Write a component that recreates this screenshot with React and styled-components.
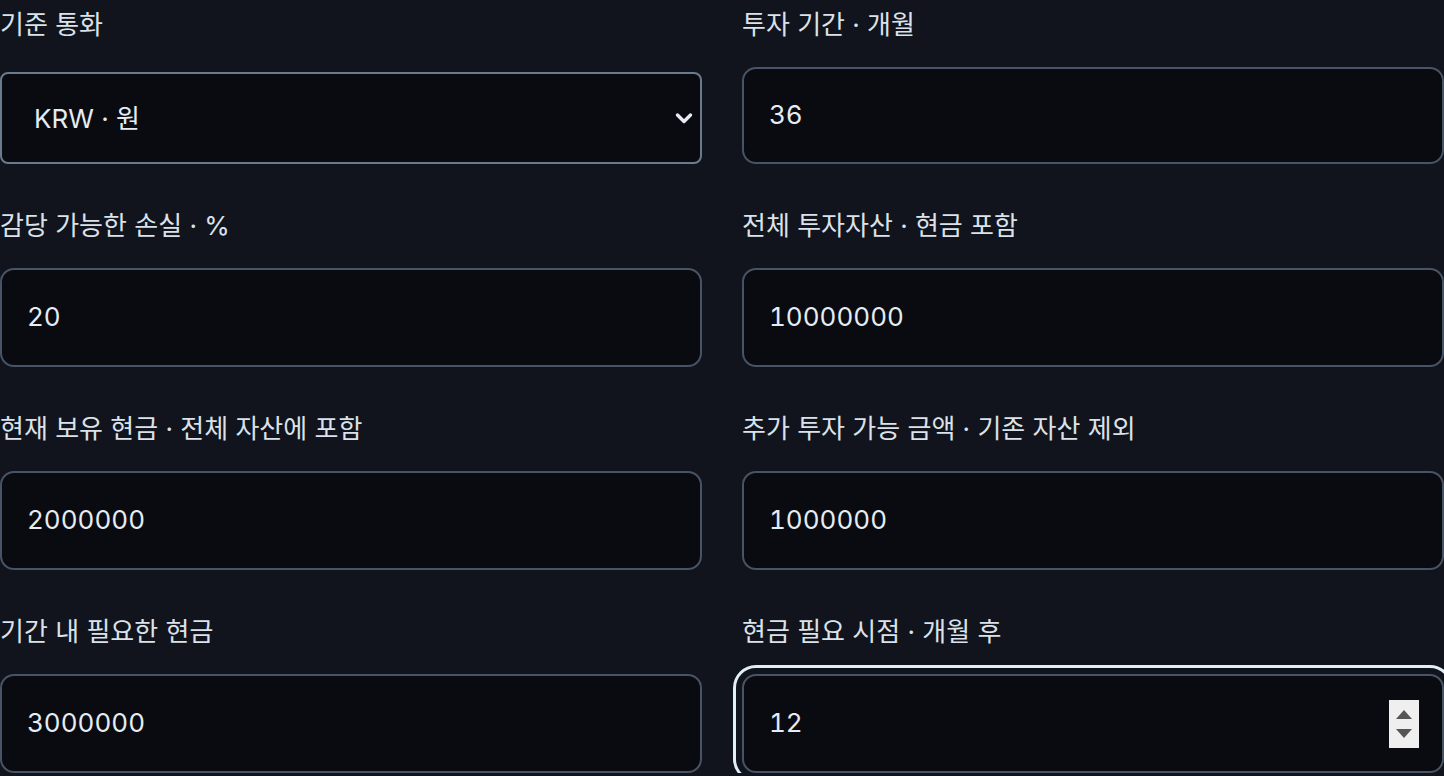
import React from "react";
import styled, { createGlobalStyle } from "styled-components";

const Global = createGlobalStyle`
  html, body { margin: 0; padding: 0; background: #11141c; }
  body { font-family: Inter, "Noto Sans CJK KR", sans-serif; color: #e2e8f0; }
  * { box-sizing: border-box; }
  input[type=number]::-webkit-inner-spin-button,
  input[type=number]::-webkit-outer-spin-button { -webkit-appearance: none; margin: 0; }
`;

const Grid = styled.div`
  display: grid;
  grid-template-columns: 702px 702px;
  column-gap: 40px;
  row-gap: 42px;
  padding-top: 5px;
  width: 1444px;
`;

const Field = styled.label`
  display: flex;
  flex-direction: column;
  justify-content: space-between;
`;

const LabelText = styled.span`
  font-family: Inter, "Noto Sans CJK KR", sans-serif;
  font-size: 26px;
  font-weight: 400;
  line-height: 39px;
  color: #dbe2ea;
  margin-bottom: 23px;
  white-space: nowrap;
`;

const Control = styled.div`
  position: relative;
`;

const Input = styled.input`
  display: block;
  width: 100%;
  height: ${(p) => (p.$short ? 97 : 99)}px;
  background: #0a0b10;
  border: 2px solid #475465;
  border-radius: 14px;
  padding: 0 0 2px 25px;
  font-family: Inter, "Noto Sans CJK KR", sans-serif;
  font-size: 26px;
  font-variant-numeric: tabular-nums;
  color: #e5ecf3;
  outline: ${(p) => (p.$focused ? "3px solid #e2eff9" : "none")};
  outline-offset: 6px;
  -moz-appearance: textfield;
`;

const Select = styled.select`
  display: block;
  width: 100%;
  height: 92px;
  appearance: none;
  -webkit-appearance: none;
  background: #0a0b10;
  border: 2px solid #6b7a8c;
  border-radius: 8px;
  padding: 0 0 0 32px;
  font-family: Inter, "Noto Sans CJK KR", sans-serif;
  font-size: 26px;
  color: #e5ecf3;
  outline: none;
`;

const Chevron = styled.svg`
  position: absolute;
  right: 9px;
  top: 50%;
  margin-top: -6px;
  width: 18px;
  height: 13px;
  pointer-events: none;
`;

const Spinner = styled.div`
  position: absolute;
  right: 25px;
  top: 50%;
  margin-top: -24px;
  width: 30px;
  height: 48px;
  background: #efefef;
  display: flex;
  flex-direction: column;
  align-items: center;
  justify-content: center;
  gap: 10px;
  pointer-events: none;
`;

const Tri = styled.div`
  width: 0;
  height: 0;
  border-left: 8px solid transparent;
  border-right: 8px solid transparent;
  ${(p) =>
    p.$up
      ? "border-bottom: 9px solid #555;"
      : "border-top: 9px solid #555;"}
`;

const fields = [
  { label: "투자 기간 · 개월", value: "36" },
  { label: "감당 가능한 손실 · %", value: "20" },
  { label: "전체 투자자산 · 현금 포함", value: "10000000" },
  { label: "현재 보유 현금 · 전체 자산에 포함", value: "2000000" },
  { label: "추가 투자 가능 금액 · 기존 자산 제외", value: "1000000" },
  { label: "기간 내 필요한 현금", value: "3000000" },
  { label: "현금 필요 시점 · 개월 후", value: "12", focused: true },
];

export default function App() {
  return (
    <>
      <Global />
      <Grid>
        <Field>
          <LabelText>기준 통화</LabelText>
          <Control>
            <Select defaultValue="KRW">
              <option value="KRW">KRW · 원</option>
              <option value="USD">USD · 달러</option>
            </Select>
            <Chevron viewBox="0 0 18 13">
              <path d="M2.5 3 L9 9.5 L15.5 3" fill="none" stroke="#e5ecf3" strokeWidth="3.4" strokeLinecap="round" strokeLinejoin="round" />
            </Chevron>
          </Control>
        </Field>
        {fields.map((f, i) => (
          <Field key={i}>
            <LabelText>{f.label}</LabelText>
            <Control>
              <Input type="number" defaultValue={f.value} $focused={f.focused} $short={i === 0} />
              {f.focused && (
                <Spinner>
                  <Tri $up />
                  <Tri />
                </Spinner>
              )}
            </Control>
          </Field>
        ))}
      </Grid>
    </>
  );
}
